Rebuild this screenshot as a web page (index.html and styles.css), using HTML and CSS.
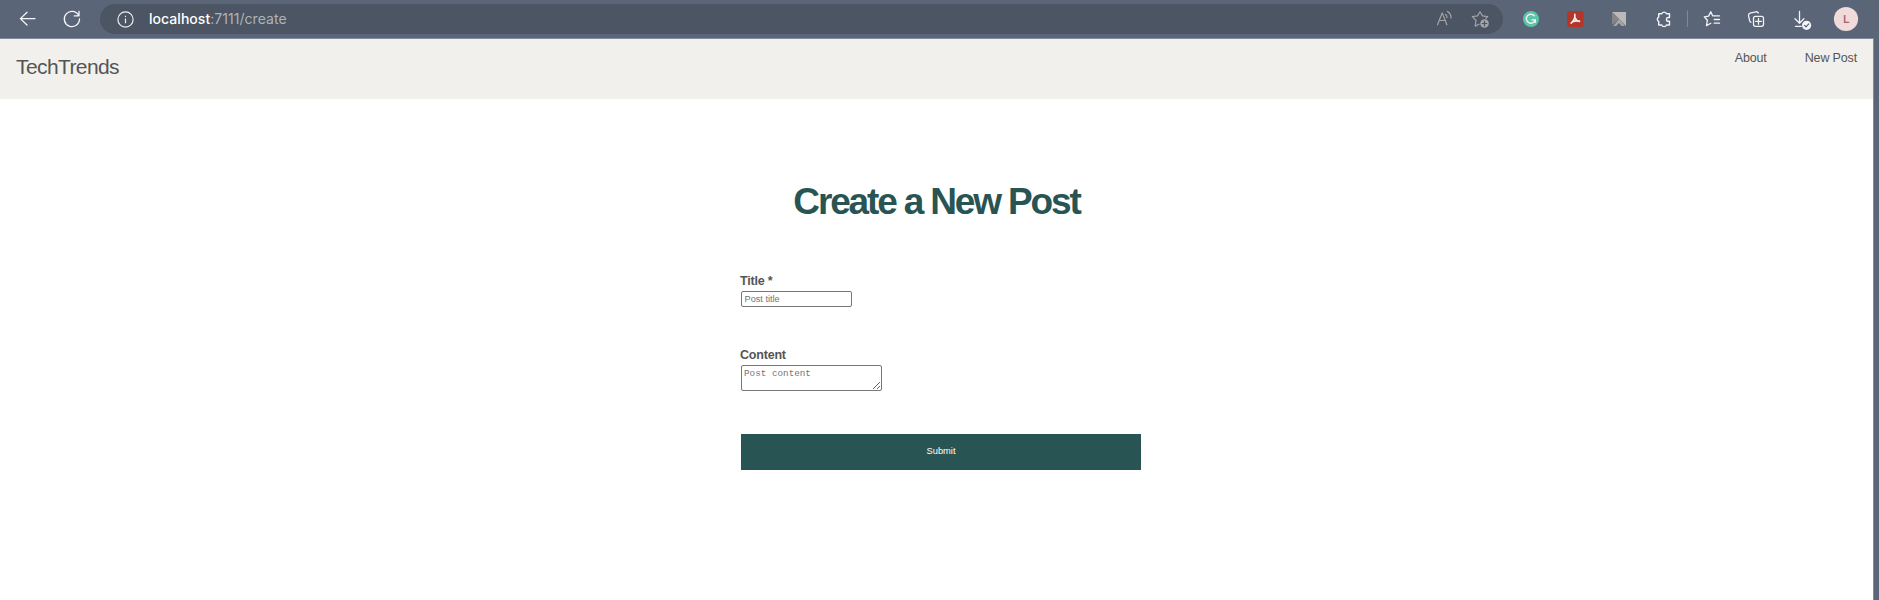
FILE: index.html
```html
<!DOCTYPE html>
<html lang="en">
<head>
<meta charset="utf-8">
<title>TechTrends</title>
<link rel="stylesheet" href="styles.css">
</head>
<body>
<div class="toolbar">
  <svg class="nav-icons" width="100" height="38" viewBox="0 0 100 38" fill="none" stroke="#f5f6f8" stroke-width="1.3" stroke-linecap="round" stroke-linejoin="round">
    <path d="M35 18.6H20.5M27 12.2l-6.6 6.4 6.6 6.4"/>
    <path d="M78.7 15.6a7.6 7.6 0 1 0 .8 3.4M79 11.3v4.6h-4.7"/>
  </svg>
  <div class="address">
    <svg class="info" width="17" height="17" viewBox="0 0 17 17" fill="none" stroke="#eceef0" stroke-width="1.2"><circle cx="8.5" cy="8.5" r="7.6"/><path d="M8.5 7.5v4.7M8.5 4.7v1.4"/></svg>
    <span class="url"><b class="host">localhost</b>:7111/create</span>
    <svg class="page-actions" width="60" height="30" viewBox="1434 4 60 30" fill="none" stroke="#a3a5a9" stroke-width="1.2" stroke-linecap="round" stroke-linejoin="round">
      <path d="M1437.5 24.7l4.7-11.8 4.7 11.8M1439.2 20.5h6M1445.5 14.4c1 .7 1.5 1.6 1.5 3M1447.5 11.4c2.4 1.5 3.6 3.6 3.6 6.5"/>
      <path d="M1479 24.2l-3.8 1.9.8-5.6-3.7-3.8 5.2-.8 2.5-4.1 2.5 4.1 5.2.8-2 2"/>
      <circle cx="1484.5" cy="23.5" r="4.3" fill="#a3a5a9" stroke="none"/><path stroke="#4b5563" d="M1484.5 21.2v4.6M1482.2 23.5h4.6"/>
    </svg>
  </div>
  <svg class="tools" width="376" height="38" viewBox="1503 0 376 38" fill="none" stroke="#f2f3f5" stroke-width="1.3" stroke-linecap="round" stroke-linejoin="round">
    <circle cx="1531" cy="19" r="8" fill="#5bc5a7" stroke="none"/>
    <path stroke-width="1.4" d="M1534.3 15.8a4.5 4.5 0 1 0 .9 4.1h-3.2M1535.3 19.8v2.6"/>
    <rect x="1567" y="11" width="16.5" height="16" rx="2.5" fill="#b63529" stroke="none"/>
    <path stroke-width="1.6" d="M1574.8 14.3c.5 3.5-1.2 6.4-3.6 8.8M1574.9 17.5c.8 2.3 2.3 3.5 4.6 3.9M1572.4 21.8c2.2-1 4.2-1.2 7-.8"/>
    <g stroke="none"><path fill="#bab9b7" d="M1612 12h14v14z"/><path fill="#85858a" d="M1612 12l7 7-7 6z"/><path fill="#a8a7a5" d="M1619 19l6 7h-3.4l-2.6-3-2.8 3h-3z"/></g>
    <path stroke-width="1.4" d="M1658.7 13.7h3a2.6 2.6 0 0 1 4.8 0h3v3.8h-1.1a1.9 1.9 0 0 0 0 3.8h1.1v3.7h-3a2.6 2.6 0 0 1-4.8 0h-3v-3.7a2.3 2.3 0 0 1 0-4.2z"/>
    <path stroke="#818a9a" stroke-width="1" d="M1687.5 11v15.5"/>
    <path d="M1714.8 15.8h-2.2l-1.8-4.1-2.2 4.4-4.3.7 3.1 3.4-.9 5.4 4.3-2.3M1714.5 15.8h5M1714.2 19.5h5.3M1714.2 23.2h5.3"/>
    <path d="M1751 22.3c-1-.3-1.4-1-1.5-2.1l-1-4.6c-.2-1.2.4-2 1.6-2.4l5.8-1.4c1.2-.2 2 .2 2.5 1.2"/>
    <rect x="1753.5" y="16.3" width="10" height="10" rx="2"/><path d="M1758.5 18.4v5.9M1755.6 21.3h5.9"/>
    <path d="M1799.5 11.5v11.7M1795 18.8l4.5 4.5 4.4-4.5M1795.5 26.3h5.8"/>
    <circle cx="1806.6" cy="25.3" r="4.6" fill="#f5f6f8" stroke="none"/><path stroke="#5a6577" d="M1804.5 25.4l1.5 1.5 2.8-3"/>
    <circle cx="1846" cy="19" r="12.1" fill="#f0dada" stroke="none"/>
    <text class="avatar" x="1846.2" y="22.8" text-anchor="middle">L</text>
  </svg>
</div>
<div class="viewport">
  <header class="header">
    <a class="brand">TechTrends</a>
    <nav class="links"><a>About</a><a>New Post</a></nav>
  </header>
  <main class="content">
    <h1 class="title">Create a New Post</h1>
    <form class="form">
      <label class="label" for="title">Title *</label>
      <input class="field" id="title" placeholder="Post title">
      <label class="label label-content" for="content">Content</label>
      <textarea class="area" id="content" placeholder="Post content"></textarea>
      <button class="submit" type="button">Submit</button>
    </form>
  </main>
</div>
</body>
</html>
```
FILE: styles.css
```css
* { box-sizing: border-box; }
body {
  margin: 0;
  height: 600px;
  overflow: hidden;
  background: #5a6577;
  font-family: "Liberation Sans", Arial, sans-serif;
  color: #555;
}
.toolbar { display: flex; height: 38px; }
.toolbar svg { display: block; flex: none; }
.address {
  display: flex;
  align-items: center;
  width: 1403px;
  height: 30px;
  margin-top: 4px;
  padding: 0 9px 0 17px;
  border-radius: 15px;
  background: #4b5563;
}
.url {
  margin-left: 15px;
  font: 14px/30px Inter, sans-serif;
  letter-spacing: 0.04px;
  color: #b0b3b8;
}
.host { font-weight: 500; color: #fff; }
.page-actions { margin-left: auto; }
.avatar { font: bold 10px "Liberation Sans", sans-serif; fill: #a5666e; stroke: none; }
.viewport {
  width: 1874px;
  height: 562px;
  border-top: 1px solid #818b9b;
  border-right: 1px solid #818b9b;
  background: #fff;
}
.header {
  display: flex;
  justify-content: space-between;
  height: 60px;
  padding: 0 16px;
  background: #f1f0ec;
}
.brand { margin-top: 15px; font-size: 21px; line-height: 26px; letter-spacing: -0.6px; }
.links { display: flex; gap: 38px; margin-top: 10px; font-size: 12.5px; line-height: 18px; letter-spacing: -0.15px; }
.content { padding-top: 81px; }
.title {
  margin: 0;
  font-size: 37px;
  line-height: 44px;
  letter-spacing: -2.15px;
  text-align: center;
  color: #285554;
}
.form { display: flex; flex-direction: column; align-items: flex-start; width: 400px; margin: 48px 0 0 741px; }
.label { margin-left: -1px; font-size: 12.5px; font-weight: bold; line-height: 18px; letter-spacing: -0.2px; }
.label-content { margin-top: 39px; }
.field, .area { border: 1px solid #767676; border-radius: 2px; background: #fff; }
.field {
  width: 111px;
  height: 16px;
  margin-top: 1px;
  padding: 0 2.5px;
  font: 9.2px "Liberation Sans", sans-serif;
}
.area {
  width: 141px;
  height: 26px;
  margin-top: 1px;
  padding: 2px;
  font: 9.3px/11px "Liberation Mono", monospace;
  overflow: hidden;
}
.field::placeholder, .area::placeholder { color: #757575; }
.submit {
  width: 400px;
  height: 36px;
  margin-top: 43px;
  padding: 0 0 2px;
  border: 0;
  background: #285554;
  color: #fff;
  font: 9.3px "Liberation Sans", sans-serif;
}
```
